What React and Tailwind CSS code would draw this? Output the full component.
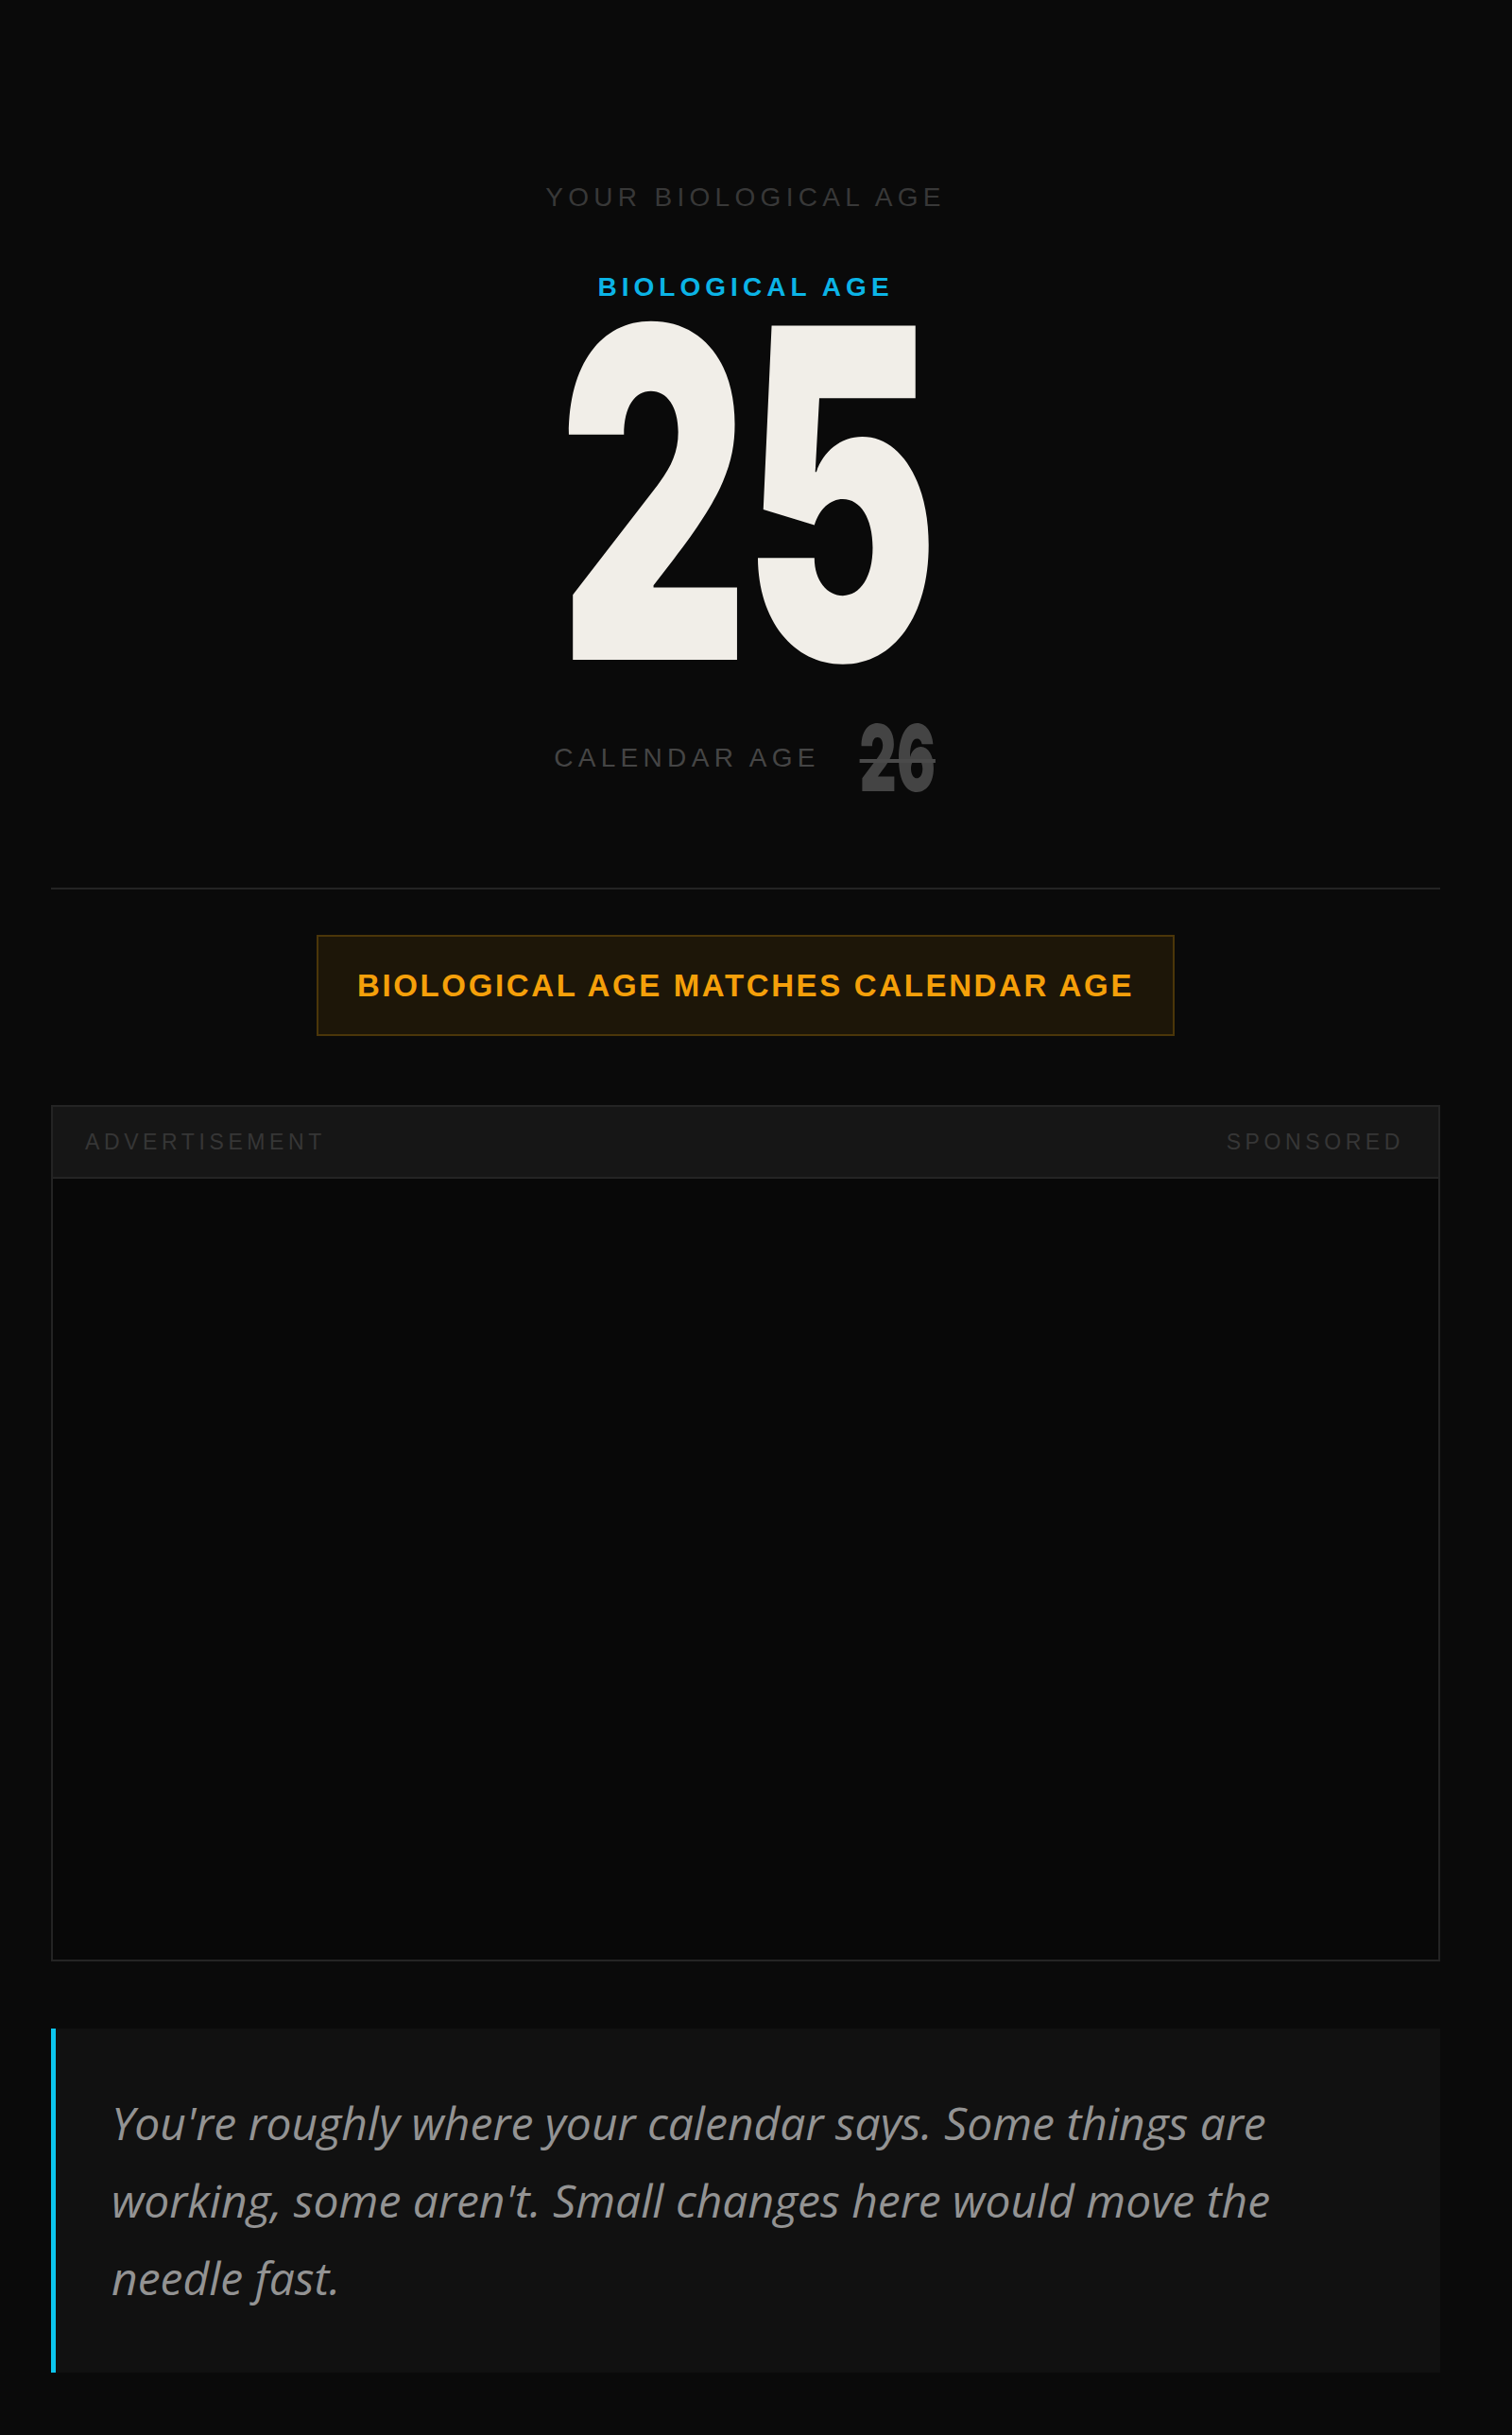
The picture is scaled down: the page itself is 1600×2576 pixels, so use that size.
import React from "react";

const label = "font-['Liberation_Sans',Arial,sans-serif]";

const App = () => {
  return (
    <div className="min-h-screen w-full bg-[#0a0a0a] pl-[54px] pr-[76px] pb-[66px]">
      {/* hero */}
      <div className="flex flex-col items-center pt-[193px]">
        <div className={`${label} text-[28px] leading-[32px] tracking-[0.19em] text-[#383838]`}>
          YOUR BIOLOGICAL AGE
        </div>
        <div className={`${label} mt-[63px] text-[28px] font-bold leading-[32px] tracking-[0.18em] text-[#0bb4e6]`}>
          BIOLOGICAL AGE
        </div>

        <div className="mt-[22px] flex h-[358px] w-[399px] items-center justify-center">
          <span className="inline-block origin-center scale-x-[0.64] font-['Inter',sans-serif] text-[486px] font-black leading-[0.7] tracking-[-0.02em] text-[#f1eee8]">
            25
          </span>
        </div>

        <div className="mt-[65px] flex h-[74px] items-center gap-[40px]">
          <span className={`${label} text-[28px] leading-[32px] tracking-[0.19em] text-[#454545]`}>
            CALENDAR AGE
          </span>
          <div className="flex h-[74px] w-[84px] items-center justify-center">
            <span className="inline-block origin-center scale-x-[0.62] font-['Inter',sans-serif] text-[98px] font-black leading-[0.75] text-[#444444] line-through decoration-[#4a4a4a] decoration-[4px]">
              26
            </span>
          </div>
        </div>
      </div>

      <div className="mt-[100px] h-[2px] w-full bg-[#242424]" />

      {/* verdict */}
      <div className="mt-[48px] flex justify-center">
        <div className={`${label} flex h-[107px] w-[908px] items-center justify-center border-2 border-[#4b3609] bg-[#1d1608] text-[33px] font-bold tracking-[0.08em] text-[#f5a00a]`}>
          BIOLOGICAL AGE MATCHES CALENDAR AGE
        </div>
      </div>

      {/* ad slot */}
      <div className="mt-[73px] border-2 border-[#242424] bg-[#080808]">
        <div className={`${label} flex h-[76px] items-center justify-between border-b-2 border-[#242424] bg-[#161616] pl-[34px] pr-[36px] text-[23px] tracking-[0.2em] text-[#363636]`}>
          <span>ADVERTISEMENT</span>
          <span>SPONSORED</span>
        </div>
        <div className="h-[826px]" />
      </div>

      {/* summary */}
      <div className="mt-[71px] border-l-[5px] border-[#0cc6ee] bg-[#111111] py-[59px] pl-[59px] pr-[59px]">
        <p className="max-w-[1310px] font-['Open_Sans',sans-serif] text-[48px] italic leading-[82px] text-[#939393]">
          You're roughly where your calendar says. Some things are working, some aren't. Small changes here would move the needle fast.
        </p>
      </div>
    </div>
  );
};

export default App;
